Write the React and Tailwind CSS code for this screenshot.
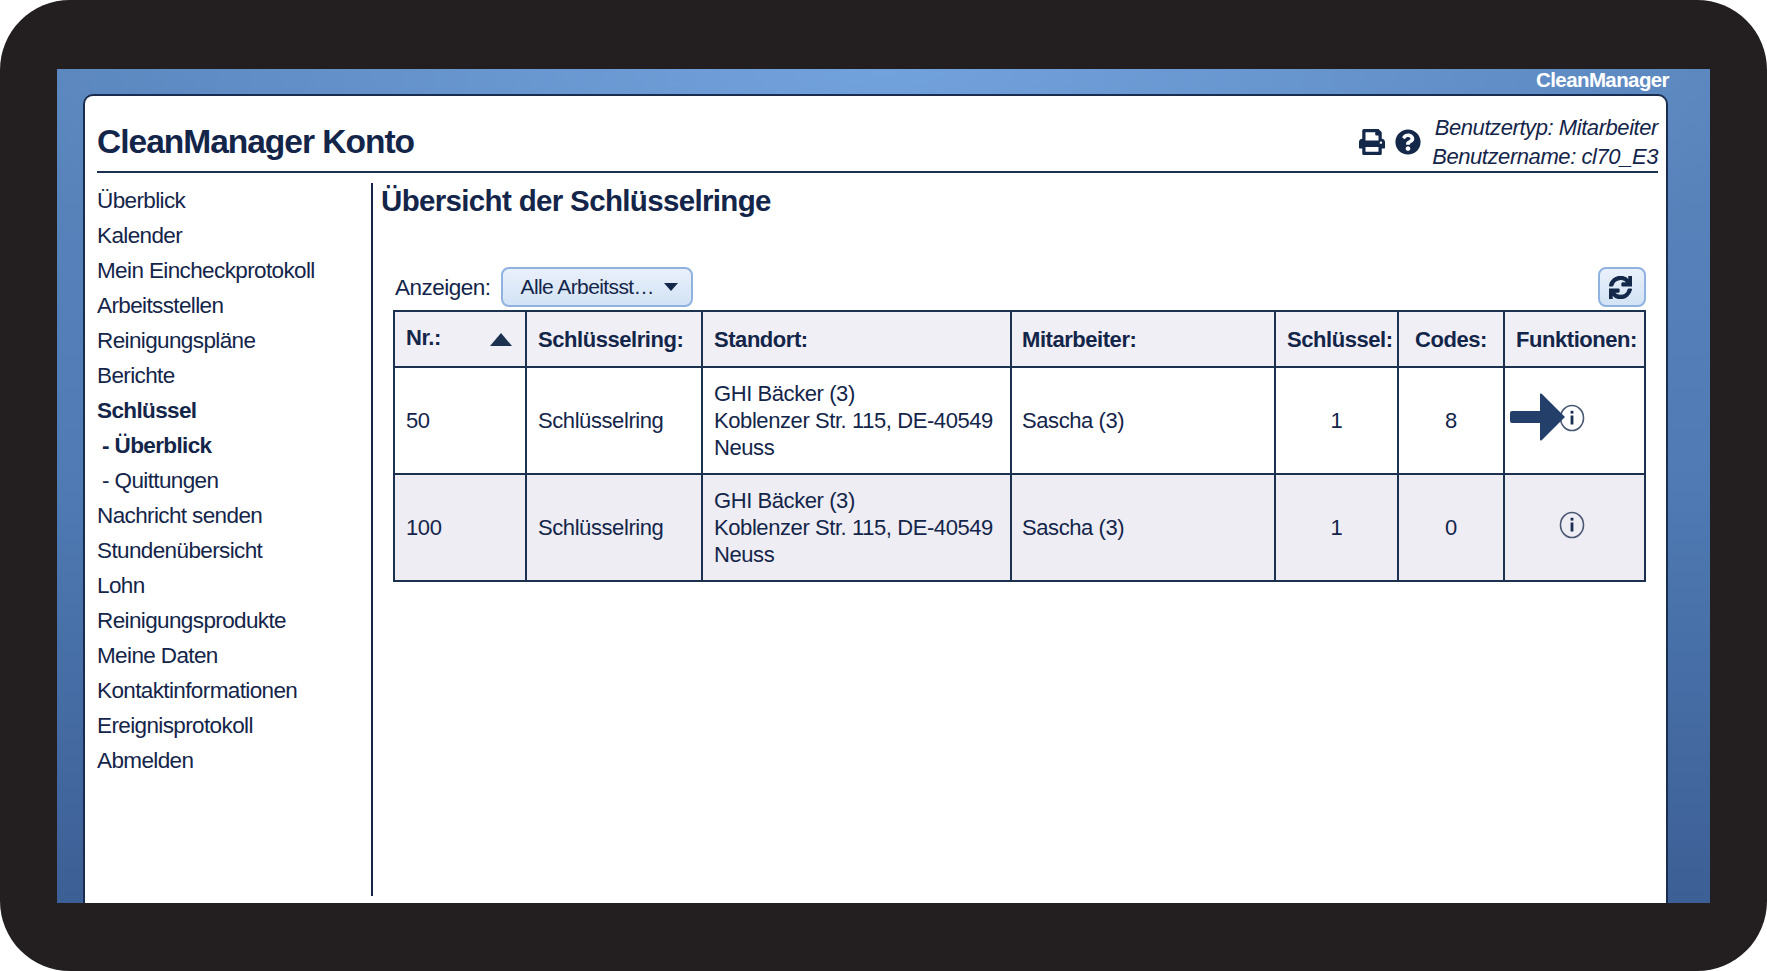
import { FaPrint, FaQuestionCircle, FaSync } from "react-icons/fa";

const navItems = [
  { label: "Überblick" },
  { label: "Kalender" },
  { label: "Mein Eincheckprotokoll" },
  { label: "Arbeitsstellen" },
  { label: "Reinigungspläne" },
  { label: "Berichte" },
  { label: "Schlüssel", bold: true },
  { label: "- Überblick", bold: true, sub: true },
  { label: "- Quittungen", sub: true },
  { label: "Nachricht senden" },
  { label: "Stundenübersicht" },
  { label: "Lohn" },
  { label: "Reinigungsprodukte" },
  { label: "Meine Daten" },
  { label: "Kontaktinformationen" },
  { label: "Ereignisprotokoll" },
  { label: "Abmelden" },
];

const rows = [
  { nr: "50", keys: "1", codes: "8", arrow: true },
  { nr: "100", keys: "1", codes: "0", shaded: true },
];

function InfoIcon() {
  return (
    <svg width="26" height="28" viewBox="0 0 26 28" className="inline-block">
      <ellipse cx="13" cy="14" rx="11.5" ry="12.5" fill="none" stroke="#4a5a75" strokeWidth="1.6" />
      <rect x="11.6" y="11.5" width="2.8" height="9" fill="#1b2f52" />
      <rect x="11.6" y="6.8" width="2.8" height="2.8" fill="#1b2f52" />
    </svg>
  );
}

export default function App() {
  const th = "border-2 border-[#1c3050] px-[11px] text-left font-bold tracking-[-0.45px]";
  const td = "border-2 border-[#1c3050] px-[11px]";

  return (
    <div className="w-[1767px] h-[971px] bg-white overflow-hidden font-['Liberation_Sans',Arial,sans-serif] text-[#14254a]">
      <div className="h-full rounded-[70px] bg-[#231f20] pt-[69px] px-[57px] pb-[68px]">
        <div className="h-full flex flex-col bg-[radial-gradient(ellipse_900px_300px_at_50%_0%,#72a2dc_0%,rgba(114,162,220,0)_100%),linear-gradient(180deg,#5a85bd_0%,#4f7ab3_50%,#3c5f95_100%)] pl-[26px] pr-[42px]">
          <div className="h-[25px] shrink-0 flex justify-end text-white font-bold text-[20.5px] leading-[21px] tracking-[-0.6px]">
            <span className="mr-[-1px]">CleanManager</span>
          </div>
          <div className="flex-1 min-h-0 bg-white border-2 border-b-0 border-[#1b2d4f] rounded-t-[10px] pl-[12px] pr-[8px] flex flex-col">
            <div className="h-[77px] shrink-0 flex items-end justify-between border-b-2 border-[#1c3050]">
              <h1 className="text-[33.5px] leading-[40px] font-bold mb-[9px] tracking-[-1px]">CleanManager Konto</h1>
              <div className="flex items-center">
                <FaPrint className="text-[#14284a] text-[26px] mr-[10px]" />
                <FaQuestionCircle className="text-[#14284a] text-[26px] mr-[11px]" />
                <div className="italic text-[22px] leading-[29px] text-right tracking-[-0.43px]">
                  <div>Benutzertyp: Mitarbeiter</div>
                  <div>Benutzername: cl70_E3</div>
                </div>
              </div>
            </div>
            <div className="flex-1 min-h-0 flex pt-[10px] pb-[7px]">
              <nav className="w-[274px] shrink-0 text-[22.5px] leading-[35px] tracking-[-0.62px]">
                {navItems.map((item) => (
                  <div key={item.label} className={`${item.bold ? "font-bold" : ""} ${item.sub ? "pl-[5px]" : ""} whitespace-nowrap`}>
                    {item.label}
                  </div>
                ))}
              </nav>
              <div className="flex-1 min-w-0 border-l-2 border-[#14254a] pl-[8px]">
                <h2 className="text-[29.5px] leading-[36px] font-bold tracking-[-0.66px]">Übersicht der Schlüsselringe</h2>
                <div className="mt-[48px] pl-[12px] pr-[12px]">
                  <div className="h-[40px] flex items-center justify-between mb-[3px]">
                    <div className="flex items-center pl-[2px]">
                      <span className="text-[22.5px] mr-[10px] mt-[2px] tracking-[-0.5px]">Anzeigen:</span>
                      <div className="w-[192px] h-[40px] rounded-[8px] border-2 border-[#8fb2e0] bg-[linear-gradient(180deg,#e9f0fa,#d3e3f5)] flex items-center justify-between pl-[18px] pr-[13px] text-[21px] tracking-[-0.6px] whitespace-nowrap">
                        <span>Alle Arbeitsst…</span>
                        <svg width="14" height="8" viewBox="0 0 14 8"><path d="M0 0h14L7 8z" fill="#14284a" /></svg>
                      </div>
                    </div>
                    <div className="w-[48px] h-[40px] rounded-[8px] border-2 border-[#8fb2e0] bg-[linear-gradient(180deg,#e9f0fa,#d3e3f5)] flex items-center justify-center">
                      <FaSync className="text-[#14284a] text-[23px] -ml-[3px]" stroke="currentColor" strokeWidth="24" />
                    </div>
                  </div>
                  <table className="w-full table-fixed border-collapse text-[22px] leading-[27px] tracking-[-0.42px]">
                    <colgroup>
                      <col className="w-[132px]" />
                      <col className="w-[176px]" />
                      <col className="w-[309px]" />
                      <col className="w-[264px]" />
                      <col className="w-[123px]" />
                      <col className="w-[106px]" />
                      <col />
                    </colgroup>
                    <thead>
                      <tr className="h-[56px] bg-[#f0eff5]">
                        <th className={th}>
                          <div className="flex items-center justify-between">
                            <span className="-mt-[3px]">Nr.:</span>
                            <svg width="22" height="13" viewBox="0 0 22 13" className="mr-[2px]"><path d="M11 0l11 13H0z" fill="#1c3050" /></svg>
                          </div>
                        </th>
                        <th className={th}>Schlüsselring:</th>
                        <th className={th}>Standort:</th>
                        <th className={`${th} !pl-[10px]`}>Mitarbeiter:</th>
                        <th className={`${th} whitespace-nowrap`}>Schlüssel:</th>
                        <th className={`${th} !text-center`}>Codes:</th>
                        <th className={`${th} whitespace-nowrap`}>Funktionen:</th>
                      </tr>
                    </thead>
                    <tbody>
                      {rows.map((row) => (
                        <tr key={row.nr} className={`h-[107px] ${row.shaded ? "bg-[#eeedf3]" : "bg-white"}`}>
                          <td className={td}>{row.nr}</td>
                          <td className={td}>Schlüsselring</td>
                          <td className={`${td} whitespace-nowrap`}>
                            GHI Bäcker (3)<br />
                            Koblenzer Str. 115, DE-40549<br />
                            Neuss
                          </td>
                          <td className={`${td} !pl-[10px]`}>Sascha (3)</td>
                          <td className={`${td} text-center`}>{row.keys}</td>
                          <td className={`${td} text-center`}>{row.codes}</td>
                          <td className={`${td} text-center relative`}>
                            <span className="relative top-[-3px] left-[-3px]"><InfoIcon /></span>
                            {row.arrow && (
                              <svg width="56" height="48" viewBox="0 0 56 48" className="absolute left-[5px] top-[25px]">
                                <path d="M2 18h28V1.5a1 1 0 0 1 1.7-.7L55 24 31.7 47.2a1 1 0 0 1-1.7-.7V30H2a2 2 0 0 1-2-2v-8a2 2 0 0 1 2-2z" fill="#24406a" />
                              </svg>
                            )}
                          </td>
                        </tr>
                      ))}
                    </tbody>
                  </table>
                </div>
              </div>
            </div>
          </div>
        </div>
      </div>
    </div>
  );
}
